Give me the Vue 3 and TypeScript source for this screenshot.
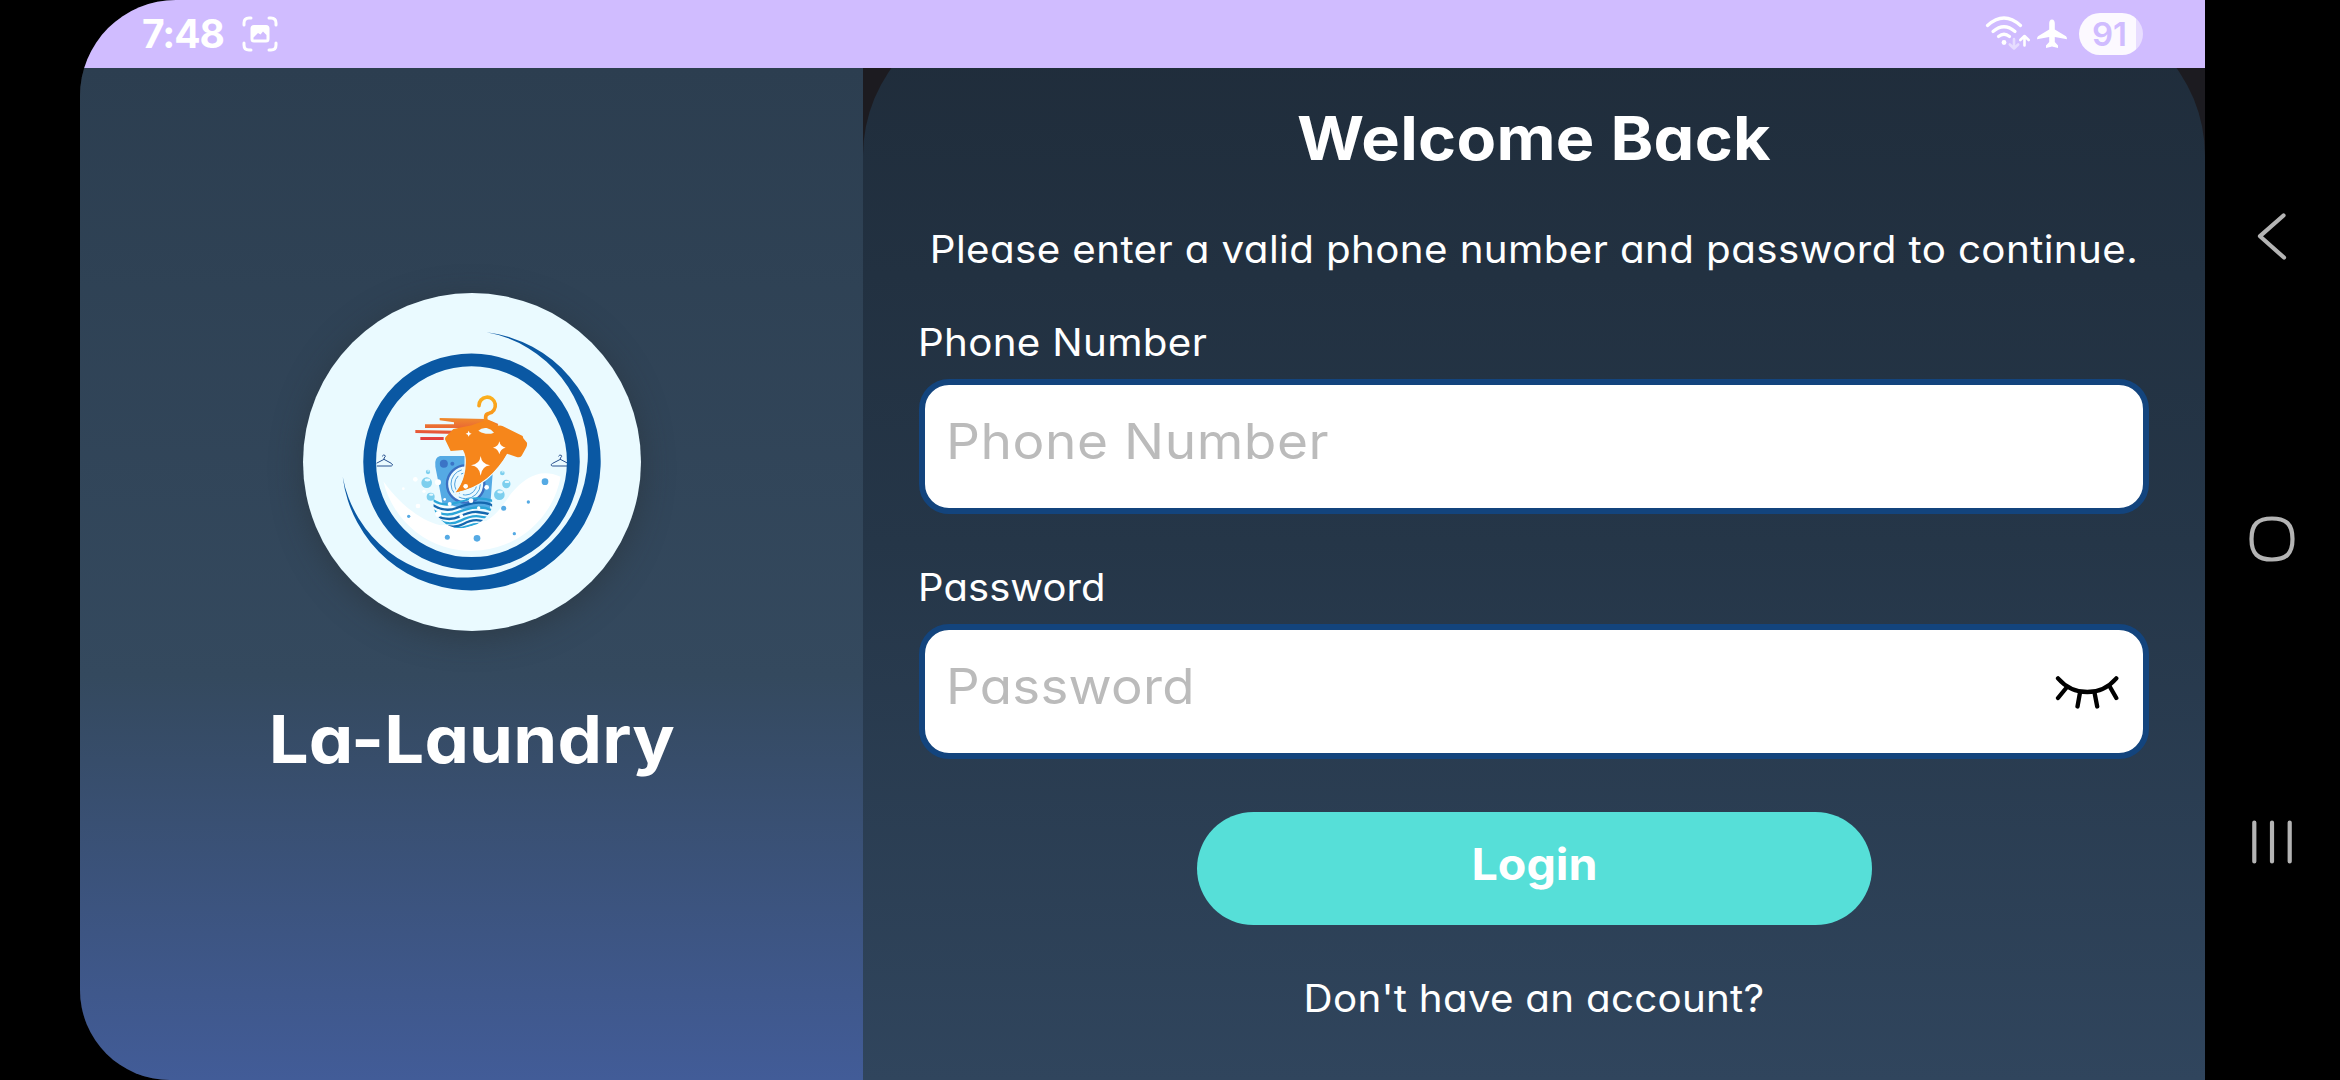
<script setup lang="ts">
import { ref } from 'vue'

const phone = ref('')
const password = ref('')
const battery = 91

interface Dot { x: number; y: number; r: number }

const bubbles: Dot[] = [
  { x: 410, y: 608, r: 16 },
  { x: 422, y: 650, r: 12 },
  { x: 414, y: 576, r: 6.5 },
  { x: 649, y: 612, r: 12.5 },
  { x: 628, y: 644, r: 16 },
  { x: 637, y: 579, r: 7 },
]

const drops: Dot[] = [
  { x: 765, y: 605, r: 10 },
  { x: 715, y: 666, r: 5 },
  { x: 641, y: 685, r: 7.5 },
  { x: 673, y: 761, r: 5 },
  { x: 561, y: 775, r: 10 },
  { x: 472, y: 772, r: 7.5 },
  { x: 356, y: 709, r: 5 },
]

const foam: Dot[] = [
  { x: 376, y: 598, r: 7 },
  { x: 444, y: 607, r: 9 },
  { x: 340, y: 626, r: 4 },
  { x: 402, y: 634, r: 5 },
  { x: 384, y: 678, r: 7 },
  { x: 590, y: 622, r: 7 },
  { x: 527, y: 619, r: 7 },
  { x: 543, y: 662, r: 7 },
  { x: 464, y: 658, r: 4 },
  { x: 479, y: 672, r: 6 },
  { x: 514, y: 708, r: 6 },
  { x: 566, y: 684, r: 5 },
  { x: 445, y: 702, r: 9 },
]
</script>

<template>
  <div class="device">
    <div class="screen">
      <header class="status">
        <div class="status-left">
          <span class="clock">7:48</span>
          <svg class="shot" viewBox="0 0 36 36" width="36" height="36">
            <g fill="none" stroke="#fff" stroke-width="3" stroke-linecap="round">
              <path d="M2 9V7Q2 2 7 2H9M27 2H29Q34 2 34 7V9M34 27V29Q34 34 29 34H27M9 34H7Q2 34 2 29V27" />
            </g>
            <path
              fill="#fff"
              fill-rule="evenodd"
              d="M12 9H24Q27.500 9 27.500 12.500V23Q27.500 26.500 24 26.500H12Q8.500 26.500 8.500 23V12.500Q8.500 9 12 9ZM11.500 21.500V23.500H24.500V19L21 15.500L18.500 18.500L16 17Z"
            />
          </svg>
        </div>
        <div class="status-right">
          <svg class="wifi" viewBox="0 0 46 36" width="46" height="36">
            <g fill="none" stroke="#fff" stroke-width="3.200" stroke-linecap="round">
              <path d="M2.500 10.500Q19 -4.500 35.500 10.500" />
              <path d="M8 16.500Q19 7 30 16.500" />
              <path d="M13.500 21.500Q19 17 24.500 21.500" />
            </g>
            <circle cx="19" cy="27.500" r="2.400" fill="#fff" />
            <g fill="none" stroke-width="2.600" stroke-linecap="round" stroke-linejoin="round">
              <path stroke="#e6dcff" d="M29 24V33M24.800 29.500L29 33.500L33.200 29.500" />
              <path stroke="#fff" d="M39.500 30.500V21.500M35.300 25L39.500 21L43.700 25" />
            </g>
          </svg>
          <svg class="plane" viewBox="0 0 32 30" width="32" height="30">
            <path
              fill="#fff"
              d="M16 0.500C18 0.500 18.800 2.500 18.800 4.500V10.500L30 17.200Q31 18 31 20.200L18.800 18V23L22 26.500V29L16 27.500L10 29V26.500L13.200 23V18L1 20.200Q1 18 2 17.200L13.200 10.500V4.500C13.200 2.500 14 0.500 16 0.500Z"
            />
          </svg>
          <span class="battery"><span class="level">{{ battery }}</span></span>
        </div>
      </header>

      <main class="content">
        <section class="brand">
          <div class="logo">
            <svg viewBox="39 39 1014 1014" width="338" height="338">
              <defs>
                <linearGradient id="speed" x1="0" y1="415" x2="0" y2="480" gradientUnits="userSpaceOnUse">
                  <stop offset="0" stop-color="#f08a2c" />
                  <stop offset="1" stop-color="#e23b3f" />
                </linearGradient>
                <linearGradient id="hook" x1="0" y1="345" x2="0" y2="440" gradientUnits="userSpaceOnUse">
                  <stop offset="0" stop-color="#fbb21e" />
                  <stop offset="1" stop-color="#f7861b" />
                </linearGradient>
                <clipPath id="basin">
                  <path d="M430 652Q470 672 520 660Q570 640 607 655V682Q592 716 562 732Q530 744 510 745Q478 744 456 722Q436 705 430 680Z" />
                </clipPath>
              </defs>
              <circle cx="546" cy="546" r="507" fill="#eafaff" />
              <path fill="#0a58a3" d="M590 157A388.500 388.500 0 1 1 158 590A371 371 0 1 0 590 157Z" />
              <path
                fill="#fff"
                d="M280 604C325 668 390 722 452 736L590 722C625 700 640 672 664 640C706 590 752 564 812 590A272 272 0 0 1 280 604Z"
              />
              <circle cx="544.500" cy="545" r="305.500" fill="none" stroke="#0a58a3" stroke-width="38.500" />

              <g fill="none" stroke="#27508f" stroke-width="3" stroke-linecap="round" stroke-linejoin="round">
                <path d="M262 558H304Q312 556 304 550L282 538V534Q288 530 285 526Q280 523 277 528M282 538L261 549" />
                <path d="M830 558H788Q778 556 788 550L811 538V534Q817 530 814 526Q809 523 806 528M811 538L830 548" />
              </g>

              <path fill="#55aae4" d="M450 528H612L600 686H460Q452 640 436 560Q432 532 450 528Z" />
              <circle cx="461.500" cy="551" r="12" fill="#3b74c6" />
              <circle cx="487" cy="551" r="6" fill="#3b74c6" />
              <circle cx="527" cy="612" r="56" fill="#eafaff" stroke="#3b6fc2" stroke-width="7" />
              <g fill="none" stroke="#4fa3de" stroke-width="3">
                <circle cx="527" cy="612" r="44" stroke-dasharray="90 14" />
                <circle cx="527" cy="612" r="33" stroke-dasharray="60 10" />
              </g>

              <g clip-path="url(#basin)" fill="none" stroke-width="7">
                <path fill="#f4fcff" stroke="none" d="M425 684Q470 660 520 690T610 680V750H425Z" />
                <path stroke="#2ba5d8" d="M428 660Q460 682 500 668T565 655T612 664" />
                <path stroke="#1467ae" d="M428 675Q465 698 500 684T565 668T612 680" />
                <path stroke="#2ba5d8" d="M428 690Q465 712 500 698T560 682T612 694" />
                <path stroke="#1467ae" d="M436 706Q475 726 508 710T562 696T612 706" />
                <path stroke="#2ba5d8" d="M448 722Q480 738 512 722T566 709T612 718" />
                <path stroke="#1467ae" d="M462 735Q495 746 520 732T566 721T600 726" />
                <path stroke="#2ba5d8" d="M490 744Q515 746 535 738T575 732" />
              </g>

              <g fill="#7dcfee">
                <circle v-for="b in bubbles" :key="b.x" :cx="b.x" :cy="b.y" :r="b.r" />
              </g>
              <g fill="#e4f8ff">
                <ellipse
                  v-for="b in bubbles"
                  :key="b.x"
                  :cx="b.x + b.r * 0.15"
                  :cy="b.y - b.r * 0.5"
                  :rx="b.r * 0.55"
                  :ry="b.r * 0.28"
                />
              </g>
              <g fill="#55aae4">
                <circle v-for="d in drops" :key="d.x" :cx="d.x" :cy="d.y" :r="d.r" />
              </g>

              <g fill="url(#speed)">
                <path d="M449 414L590 417L625 432L600 470H490L530 444H405V433H492V427L449 421Z" />
                <path d="M376 450L500 452V462L376 459Z" />
                <path d="M391 471H461V480H391Z" />
              </g>
              <path
                fill="none"
                stroke="url(#hook)"
                stroke-width="11"
                stroke-linecap="round"
                d="M567 377A24.500 24.500 0 1 1 597 400Q587 402 587 411V422"
              />
              <path
                fill="#f6861b"
                stroke="#eafaff"
                stroke-width="8"
                paint-order="stroke"
                d="M526 512Q535 590 498 637Q555 625 590 595Q625 565 650 521L590 480Z"
              />
              <path
                fill="#f6861b"
                d="M490 447L545 436L590 419Q610 424 626 437Q635 435 645 442L698 468L700 475L711 488Q712 496 709 502L695 527Q690 534 680 531L651 521Q630 560 590 595Q550 625 498 637Q525 600 531 560Q528 525 519 510L482 513L466 480Q463 473 470 468Z"
              />
              <path fill="#eafaff" d="M565 452Q575 442 590 444Q605 448 612 458Q600 463 587 461Q572 458 565 452Z" />
              <g fill="#fff">
                <path d="M572 528Q575 553 600 556Q575 559 572 587Q569 559 543 556Q569 553 572 528Z" />
                <path d="M628 484Q631 500 647 503Q631 506 628 523Q625 506 609 503Q625 500 628 484Z" />
                <path d="M536 452Q537 460 545 461Q537 462 536 470Q535 462 527 461Q535 460 536 452Z" />
                <circle v-for="f in foam" :key="f.x" :cx="f.x" :cy="f.y" :r="f.r" />
              </g>
            </svg>
          </div>
          <h1 class="name">La-Laundry</h1>
        </section>

        <section class="panel">
          <form class="card" @submit.prevent>
            <h2 class="title">Welcome Back</h2>
            <p class="hint">Please enter a valid phone number and password to continue.</p>

            <label class="label" for="phone">Phone Number</label>
            <div class="field">
              <input id="phone" v-model="phone" class="input" type="tel" placeholder="Phone Number" />
            </div>

            <label class="label second" for="password">Password</label>
            <div class="field">
              <input id="password" v-model="password" class="input pass" type="password" placeholder="Password" />
              <svg class="eye" viewBox="0 0 64 36" width="64" height="36">
                <g fill="none" stroke="#000" stroke-width="4.300" stroke-linecap="round">
                  <path d="M3 5.300Q15 19 32.300 19Q49.500 19 61.300 5.300" />
                  <path d="M12 14L3 25M25 19.500L22.500 33.500M39.500 19.500L42.200 33.500M55 14L61.300 25" />
                </g>
              </svg>
            </div>

            <button class="login" type="submit"><span class="login-text">Login</span></button>
            <p class="signup">Don't have an account?</p>
          </form>
        </section>
      </main>
    </div>

    <nav class="nav">
      <svg viewBox="0 0 48 48" width="48" height="48">
        <path d="M35.500 3.500L12 24.200L36 45.500" />
      </svg>
      <svg viewBox="0 0 48 48" width="48" height="48">
        <path d="M24 3.500C38 3.500 44.500 9 44.500 24S38 44.500 24 44.500S3.500 39 3.500 24S10 3.500 24 3.500Z" />
      </svg>
      <svg viewBox="0 0 48 48" width="48" height="48">
        <path d="M6.300 4.500V43.500M24 4.500V43.500M41.700 4.500V43.500" />
      </svg>
    </nav>
  </div>
</template>

<style>
body {
  margin: 0;
  background: #000;
}
</style>

<style scoped>
.device {
  display: flex;
  box-sizing: border-box;
  width: 2340px;
  height: 1080px;
  padding-left: 80px;
  overflow: hidden;
  background: #000;
  color: #fff;
  font-family: Inter, 'Open Sans', sans-serif;
  font-feature-settings: 'cv11';
}

.screen {
  display: flex;
  flex-direction: column;
  width: 2125px;
  height: 1080px;
  overflow: hidden;
  border-radius: 96px 0 0 90px;
  background: #1c1b20;
}

.status {
  display: flex;
  align-items: flex-start;
  justify-content: space-between;
  box-sizing: border-box;
  height: 68px;
  padding: 0 62px 0 62px;
  flex: none;
  background: #d0bcff;
}

.status-left,
.status-right {
  display: flex;
  align-items: flex-start;
}

.clock {
  margin-top: 14px;
  line-height: 40px;
  font-size: 39px;
  font-weight: 700;
  letter-spacing: -1.06px;
}

.shot {
  margin: 16px 0 0 18px;
}

.wifi {
  margin-top: 15px;
}

.plane {
  margin: 19px 1px 0 5px;
}

.battery {
  box-sizing: border-box;
  width: 64px;
  height: 42px;
  margin: 13px 0 0 10px;
  padding-right: 3px;
  border-radius: 21px;
  background: linear-gradient(to right, #fcf9ff 57px, #e8ddff 57px);
  color: #d0bcff;
  text-align: center;
}

.level {
  line-height: 43px;
  font-size: 33px;
  font-weight: 600;
}

.content {
  display: flex;
  flex: 1;
}

.brand {
  display: flex;
  flex-direction: column;
  align-items: center;
  box-sizing: border-box;
  width: 783px;
  padding-top: 225px;
  background: linear-gradient(to bottom, #2c3e50 0%, #34495e 60%, #425c98 100%);
}

.logo {
  width: 338px;
  height: 338px;
  border-radius: 50%;
  box-shadow: 0 6px 30px rgba(40, 48, 52, 0.5);
}

.logo svg {
  display: block;
}

.name {
  margin: 68px 0 0;
  line-height: 80px;
  font-size: 66px;
  font-weight: 700;
  letter-spacing: 0.2px;
  transform: scaleX(1.07);
}

.panel {
  flex: 1;
  overflow: hidden;
}

.card {
  display: flex;
  flex-direction: column;
  box-sizing: border-box;
  height: 1074px;
  margin-top: -62px;
  padding: 87px 56px 0;
  border-radius: 150px 150px 0 0;
  background: linear-gradient(to bottom, #1f2c3a, #253648 50%, #30455d);
}

.title {
  margin: 0;
  text-align: center;
  line-height: 90px;
  font-size: 60.5px;
  font-weight: 700;
  letter-spacing: 0.3px;
  transform: scaleX(1.07);
}

.hint {
  margin: 42px 0 0;
  text-align: center;
  line-height: 50px;
  font-size: 37.5px;
  letter-spacing: 0.36px;
  white-space: nowrap;
  transform: scaleX(1.075);
}

.label {
  margin: 43px 0 11px -1px;
  line-height: 50px;
  font-size: 37.5px;
  letter-spacing: 0.3px;
  transform: scaleX(1.075);
  transform-origin: left;
}

.label.second {
  margin-top: 49px;
  letter-spacing: 0.1px;
  transform: scaleX(1.065);
}

.field {
  display: flex;
  align-items: center;
  justify-content: space-between;
  box-sizing: border-box;
  height: 135px;
  padding: 0 24px 0 21px;
  border: 6px solid #13447d;
  border-radius: 30px;
  background: #fff;
}

.input {
  width: 1000px;
  height: 112px;
  margin: 0 0 11px;
  padding: 0;
  border: 0;
  outline: 0;
  background: transparent;
  color: #222;
  font: 400 49.5px Inter, 'Open Sans', sans-serif;
  font-feature-settings: 'cv11';
  letter-spacing: 0.5px;
  transform: scaleX(1.075);
  transform-origin: left;
}

.input.pass {
  letter-spacing: 0.29px;
  transform: scaleX(1.065);
}

.input::placeholder {
  color: #bbb;
  opacity: 1;
}

.eye {
  margin-top: -2px;
}

.login {
  align-self: center;
  width: 675px;
  height: 113px;
  margin: 53px 0 0;
  padding: 0 0 10px;
  border: 0;
  border-radius: 57px;
  background: #56dfd8;
  color: #fff;
  font: 700 44px Inter, 'Open Sans', sans-serif;
  font-feature-settings: 'cv11';
}

.login-text {
  display: inline-block;
  transform: scaleX(1.06);
}

.signup {
  margin: 48px 0 0;
  text-align: center;
  line-height: 51px;
  font-size: 37.5px;
  letter-spacing: 0.24px;
  transform: scaleX(1.075);
}

.nav {
  display: flex;
  flex-direction: column;
  align-items: center;
  justify-content: center;
  gap: 255px;
  box-sizing: border-box;
  width: 135px;
  padding: 0 2px 2px 0;
}

.nav svg {
  display: block;
  fill: none;
  stroke: #b4b4b4;
  stroke-width: 4.2;
  stroke-linecap: round;
  stroke-linejoin: round;
}
</style>
